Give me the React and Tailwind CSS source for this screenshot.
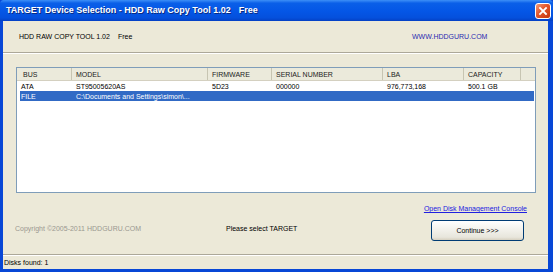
import React from 'react';

const columns = [
  { key: 'bus', label: 'BUS', width: 'w-[55px]' },
  { key: 'model', label: 'MODEL', width: 'w-[136px]' },
  { key: 'firmware', label: 'FIRMWARE', width: 'w-[64px]' },
  { key: 'serial', label: 'SERIAL NUMBER', width: 'w-[111px]' },
  { key: 'lba', label: 'LBA', width: 'w-[81px]' },
  { key: 'capacity', label: 'CAPACITY', width: 'w-[57px]' },
];

const rows = [
  { bus: 'ATA', model: 'ST95005620AS', firmware: '5D23', serial: '000000', lba: '976,773,168', capacity: '500.1 GB' },
  { bus: 'FILE', model: 'C:\\Documents and Settings\\simon\\...', firmware: '', serial: '', lba: '', capacity: '', selected: true },
];

const CloseButton = () => (
  <div className="w-[16px] h-[16px] rounded-[3px] border border-white bg-[linear-gradient(135deg,#f09a7a_0%,#e2552a_45%,#c4360e_100%)] flex items-center justify-center">
    <svg width="10" height="10" viewBox="0 0 10 10">
      <path d="M2 2 L8 8 M8 2 L2 8" stroke="#fff" strokeWidth="1.8" strokeLinecap="square" />
    </svg>
  </div>
);

export default function App() {
  return (
    <div
      className="w-[553px] h-[272px] flex flex-col bg-[#0847d6] overflow-hidden text-[7px] leading-none text-black"
      style={{ fontFamily: '"Liberation Sans", Arial, sans-serif' }}
    >
      {/* title bar */}
      <div className="h-[21px] shrink-0 flex items-center justify-between pl-[6px] pr-[2px] bg-[linear-gradient(to_bottom,#3d8ff7_0%,#0a5fe8_15%,#0456e6_55%,#0450dc_85%,#0440c4_100%)] rounded-t-[4px]">
        <div className="text-white font-bold text-[9px] [text-shadow:1px_1px_0_#0a2a80] flex">
          <span>TARGET Device Selection - HDD Raw Copy Tool 1.02</span>
          <span className="ml-[8px]">Free</span>
        </div>
        <CloseButton />
      </div>

      {/* window body */}
      <div className="flex-1 flex flex-col ml-[3px] mr-[5px] mb-[3px] bg-[#ece9d8]">
        <div className="h-[31px] flex items-center pl-[16px]">
          <span className="w-[393px] flex">
            <span>HDD RAW COPY TOOL 1.02</span>
            <span className="ml-[8px]">Free</span>
          </span>
          <span className="text-[#2a2ab0]">WWW.HDDGURU.COM</span>
        </div>
        <div className="h-[2px] border-t border-[#aca899] border-b-white border-b" />

        {/* device list */}
        <div className="mt-[13px] ml-[13px] w-[520px] h-[126px] border border-[#7f9db9] bg-white">
          <div className="h-[13px] flex bg-[#ebeadb] border-b border-[#d4d0c0]">
            {columns.map((c, i) => (
              <div
                key={c.key}
                className={`${c.width} h-full flex items-center ${i === 0 ? 'pl-[6px]' : 'pl-[4px]'} border-r border-[#c7c5b2] text-[#222]`}
              >
                {c.label}
              </div>
            ))}
          </div>
          <div className="pl-[3px] pr-[1px]">
            {rows.map((r) => (
              <div
                key={r.bus}
                className={`h-[10px] flex items-center ${r.selected ? 'bg-[#316ac5] text-white' : ''}`}
              >
                {columns.map((c, i) => (
                  <div
                    key={c.key}
                    className={`${c.width} ${i === 0 ? 'pl-[1px] !w-[52px]' : 'pl-[4px]'} whitespace-nowrap`}
                  >
                    {r[c.key]}
                  </div>
                ))}
              </div>
            ))}
          </div>
        </div>

        <div className="mt-[12px] flex justify-end pr-[21px]">
          <span className="text-[#2020e0] underline">Open Disk Management Console</span>
        </div>

        <div className="mt-[8px] h-[21px] flex items-start">
          <span className="w-[223px] pl-[12px] pt-[5px] text-[#9a9890]">Copyright ©2005-2011 HDDGURU.COM</span>
          <span className="w-[205px] pt-[5px]">Please select TARGET</span>
          <div className="w-[93px] h-[21px] rounded-[3px] border border-[#003c74] bg-[linear-gradient(to_bottom,#ffffff_0%,#f4f3ee_40%,#e8e6dc_85%,#d6d0c0_100%)] flex items-center justify-center">
            Continue &gt;&gt;&gt;
          </div>
        </div>

        <div className="mt-[13px] h-[2px] border-t border-[#aca899] border-b border-b-white" />
        <div className="flex-1 flex items-center pl-[1px]">Disks found: 1</div>
      </div>
    </div>
  );
}
